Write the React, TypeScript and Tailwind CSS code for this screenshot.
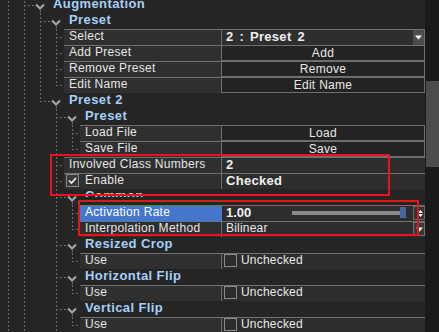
import React from "react";

type VT = "f" | "t" | "b";
type G = { v: [number, VT][]; h?: [number, number] };

const DASH_V =
  "bg-[repeating-linear-gradient(to_bottom,#6b6b6b_0px,#6b6b6b_2px,transparent_2px,transparent_4px)]";
const DASH_H =
  "bg-[repeating-linear-gradient(to_right,#6b6b6b_0px,#6b6b6b_2px,transparent_2px,transparent_4px)]";

const LEFT: Record<number, string> = {
  8: "left-[8px]",
  24: "left-[24px]",
  40: "left-[40px]",
  56: "left-[56px]",
  72: "left-[72px]",
};
const VCLS: Record<VT, string> = {
  f: "top-0 bottom-0",
  t: "top-0 h-[9px]",
  b: "top-[13px] bottom-0",
};
const HW: Record<number, string> = { 8: "w-[8px]", 10: "w-[10px]" };

function Guides({ g }: { g: G }) {
  return (
    <>
      {g.v.map(([x, t]) => (
        <span key={x} className={`absolute w-px ${LEFT[x]} ${VCLS[t]} ${DASH_V}`} />
      ))}
      {g.h && (
        <span className={`absolute top-[8px] h-px ${LEFT[g.h[0]]} ${HW[g.h[1]]} ${DASH_H}`} />
      )}
    </>
  );
}

type Val =
  | { k: "select"; text: string }
  | { k: "button"; text: string }
  | { k: "text"; text: string; bold?: boolean }
  | { k: "check"; checked: boolean }
  | { k: "slider"; text: string }
  | { k: "combo"; text: string };

type Row =
  | { k: "h"; lvl: 2 | 3 | 4; text: string; g: G; clip?: boolean }
  | { k: "l"; ind: 64 | 80; label: string; val: Val; g: G; checkbox?: boolean; selected?: boolean };

const B: [number, VT][] = [
  [8, "f"],
  [24, "f"],
];

const rows: Row[] = [
  { k: "h", lvl: 2, text: "Augmentation", g: { v: [...B, [40, "b"]], h: [24, 10] } },
  { k: "h", lvl: 3, text: "Preset", g: { v: [...B, [40, "f"], [56, "b"]], h: [40, 10] } },
  { k: "l", ind: 64, label: "Select", val: { k: "select", text: "2 : Preset 2" }, g: { v: [...B, [40, "f"], [56, "f"]], h: [56, 8] } },
  { k: "l", ind: 64, label: "Add Preset", val: { k: "button", text: "Add" }, g: { v: [...B, [40, "f"], [56, "f"]], h: [56, 8] } },
  { k: "l", ind: 64, label: "Remove Preset", val: { k: "button", text: "Remove" }, g: { v: [...B, [40, "f"], [56, "f"]], h: [56, 8] } },
  { k: "l", ind: 64, label: "Edit Name", val: { k: "button", text: "Edit Name" }, g: { v: [...B, [40, "f"], [56, "t"]], h: [56, 8] } },
  { k: "h", lvl: 3, text: "Preset 2", g: { v: [...B, [40, "t"], [56, "b"]], h: [40, 10] } },
  { k: "h", lvl: 4, text: "Preset", g: { v: [...B, [56, "f"], [72, "b"]], h: [56, 10] } },
  { k: "l", ind: 80, label: "Load File", val: { k: "button", text: "Load" }, g: { v: [...B, [56, "f"], [72, "f"]], h: [72, 8] } },
  { k: "l", ind: 80, label: "Save File", val: { k: "button", text: "Save" }, g: { v: [...B, [56, "f"], [72, "t"]], h: [72, 8] } },
  { k: "l", ind: 64, label: "Involved Class Numbers", val: { k: "text", text: "2", bold: true }, g: { v: [...B, [56, "f"]], h: [56, 8] } },
  { k: "l", ind: 64, label: "Enable", checkbox: true, val: { k: "text", text: "Checked", bold: true }, g: { v: [...B, [56, "f"]], h: [56, 8] } },
  { k: "h", lvl: 4, text: "Common", clip: true, g: { v: [...B, [56, "f"], [72, "b"]], h: [56, 10] } },
  { k: "l", ind: 80, label: "Activation Rate", selected: true, val: { k: "slider", text: "1.00" }, g: { v: [...B, [56, "f"], [72, "f"]], h: [72, 8] } },
  { k: "l", ind: 80, label: "Interpolation Method", val: { k: "combo", text: "Bilinear" }, g: { v: [...B, [56, "f"], [72, "t"]], h: [72, 8] } },
  { k: "h", lvl: 4, text: "Resized Crop", g: { v: [...B, [56, "f"], [72, "b"]], h: [56, 10] } },
  { k: "l", ind: 80, label: "Use", val: { k: "check", checked: false }, g: { v: [...B, [56, "f"], [72, "t"]], h: [72, 8] } },
  { k: "h", lvl: 4, text: "Horizontal Flip", g: { v: [...B, [56, "f"], [72, "b"]], h: [56, 10] } },
  { k: "l", ind: 80, label: "Use", val: { k: "check", checked: false }, g: { v: [...B, [56, "f"], [72, "t"]], h: [72, 8] } },
  { k: "h", lvl: 4, text: "Vertical Flip", g: { v: [...B, [56, "f"], [72, "b"]], h: [56, 10] } },
  { k: "l", ind: 80, label: "Use", val: { k: "check", checked: false }, g: { v: [...B, [56, "f"], [72, "t"]], h: [72, 8] } },
];

const HEAD_IND: Record<number, string> = { 2: "w-[35px]", 3: "w-[51px]", 4: "w-[67px]" };
const LEAF_IND: Record<number, string> = { 64: "w-[64px]", 80: "w-[80px]" };

function Chevron() {
  return (
    <svg width="10" height="16" viewBox="0 0 10 16" className="shrink-0">
      <path d="M1 7.5 L5 11.5 L9 7.5" fill="none" stroke="#a3a3a3" strokeWidth="2.2" />
    </svg>
  );
}

function DownTri() {
  return (
    <svg width="7" height="5" viewBox="0 0 7 5">
      <path d="M0 0.5 H7 L3.5 4.5 Z" fill="#ffffff" />
    </svg>
  );
}

function Check() {
  return (
    <svg width="11" height="11" viewBox="0 0 11 11">
      <path d="M2 5.5 L4.5 8 L9 3" fill="none" stroke="#eeeeee" strokeWidth="1.7" />
    </svg>
  );
}

function Value({ v, selected }: { v: Val; selected?: boolean }) {
  const sep = selected ? "border-l border-[#4677cc]" : "border-l border-[#6e6e6e]";
  switch (v.k) {
    case "select":
      return (
        <div className={`flex w-[204px] ${sep} border-r bg-[#2e2e2e]`}>
          <span className="flex-1 pl-[4px] text-[13px] font-bold leading-[14px] tracking-[0.3px] text-[#eeeeee] [word-spacing:2px]">
            {v.text}
          </span>
          <div className="flex h-full w-[11px] items-center justify-center bg-[#4d4d4d]">
            <DownTri />
          </div>
        </div>
      );
    case "button":
      return (
        <div className={`flex w-[204px] items-center justify-center ${sep} border-r border-b border-[#6e6e6e] bg-[#232323] text-[12px] leading-[13px] tracking-[0.3px] text-[#e8e8e8]`}>
          {v.text}
        </div>
      );
    case "text":
      return (
        <div
          className={`w-[204px] ${sep} pl-[4px] ${
            v.bold
              ? "text-[13px] font-bold leading-[14px] tracking-[0.3px] text-[#f0f0f0]"
              : "text-[12px] leading-[13px] text-[#e8e8e8]"
          }`}
        >
          {v.text}
        </div>
      );
    case "check":
      return (
        <div className={`flex w-[204px] items-start ${sep} pl-[2px]`}>
          <span className="h-[13px] w-[13px] border border-[#8a8a8a]" />
          <span className="ml-[4px] text-[12px] leading-[13px] tracking-[0.2px] text-[#e8e8e8]">Unchecked</span>
        </div>
      );
    case "slider":
      return (
        <div className={`flex w-[204px] items-start ${sep} pl-[4px]`}>
          <span className="text-[13px] font-bold leading-[14px] text-[#f0f0f0]">{v.text}</span>
          <div className="relative ml-auto h-full w-[114px]">
            <span className="absolute left-0 top-[5px] h-[4px] w-[110px] bg-[#8a8a8a]" />
            <span className="absolute right-0 top-[1px] h-[11px] w-[6px] bg-[#4a64a0]" />
          </div>
          <div className="ml-[7px] flex h-[14px] w-[12px] flex-col items-end justify-center gap-[1px] border border-[#666666] bg-[#333333] pr-[1px]">
            <svg width="5" height="3" viewBox="0 0 5 3">
              <path d="M0 3 L2.5 0 L5 3 Z" fill="#ffffff" />
            </svg>
            <svg width="5" height="3" viewBox="0 0 5 3">
              <path d="M0 0 H5 L2.5 3 Z" fill="#ffffff" />
            </svg>
          </div>
        </div>
      );
    case "combo":
      return (
        <div className={`flex w-[204px] items-start ${sep} pl-[4px]`}>
          <span className="text-[12px] leading-[13px] tracking-[0.2px] text-[#e8e8e8]">{v.text}</span>
          <div className="ml-auto flex h-[14px] w-[12px] items-center justify-end border border-[#707070] bg-[#3a3a3a] pr-[1px]">
            <DownTri />
          </div>
        </div>
      );
  }
}

function RowView({ r }: { r: Row }) {
  if (r.k === "h") {
    return (
      <div className="relative flex h-4 shrink-0 items-start">
        <Guides g={r.g} />
        <div className={`${HEAD_IND[r.lvl]} shrink-0`} />
        <Chevron />
        <span className="ml-[8px] whitespace-nowrap text-[13px] font-bold leading-[14px] tracking-[0.4px] text-[#a6cff8]">
          {r.text}
        </span>
        {r.clip && <span className="absolute left-[78px] right-0 top-[8px] bottom-0 bg-[#252525]" />}
      </div>
    );
  }
  return (
    <div className="relative flex h-4 shrink-0">
      <Guides g={r.g} />
      <div className={`${LEAF_IND[r.ind]} shrink-0`} />
      <div className="flex flex-1 border-t border-[#707070]">
        <div
          className={`flex flex-1 items-start ${
            r.selected ? "bg-[#4677cc] text-white" : "bg-[#2f2f2f] text-[#e6e6e6]"
          } ${r.checkbox ? "pl-[2px]" : "pl-[5px]"}`}
        >
          {r.checkbox && (
            <span className="mr-[6px] flex h-[13px] w-[13px] items-center justify-center border border-[#8a8a8a] bg-[#3a3a3a]">
              <Check />
            </span>
          )}
          <span className="whitespace-nowrap text-[12px] leading-[13px] tracking-[0.3px]">{r.label}</span>
        </div>
        <div className="flex bg-[#2d2d2d]">
          <Value v={r.val} selected={r.selected} />
        </div>
      </div>
    </div>
  );
}

export default function App() {
  return (
    <div className="flex h-[332px] w-[439px] overflow-hidden bg-[#252525] font-['Liberation_Sans',Arial,sans-serif]">
      <div className="relative h-full w-[425px] overflow-hidden">
        <div className="mt-[-3px] flex flex-col">
          {rows.map((r, i) => (
            <RowView key={i} r={r} />
          ))}
        </div>
        <div className="absolute left-[50px] top-[154px] h-[42px] w-[340px] border-2 border-[#e3161f]" />
        <div className="absolute left-[78px] top-[200px] h-[36px] w-[341px] border-2 border-[#e3161f]" />
      </div>
      <div className="w-[14px] bg-[#1a1a1a]">
        <div className="ml-[1px] mt-[81px] h-[86px] w-[13px] bg-[#4c4c4c]" />
      </div>
    </div>
  );
}
